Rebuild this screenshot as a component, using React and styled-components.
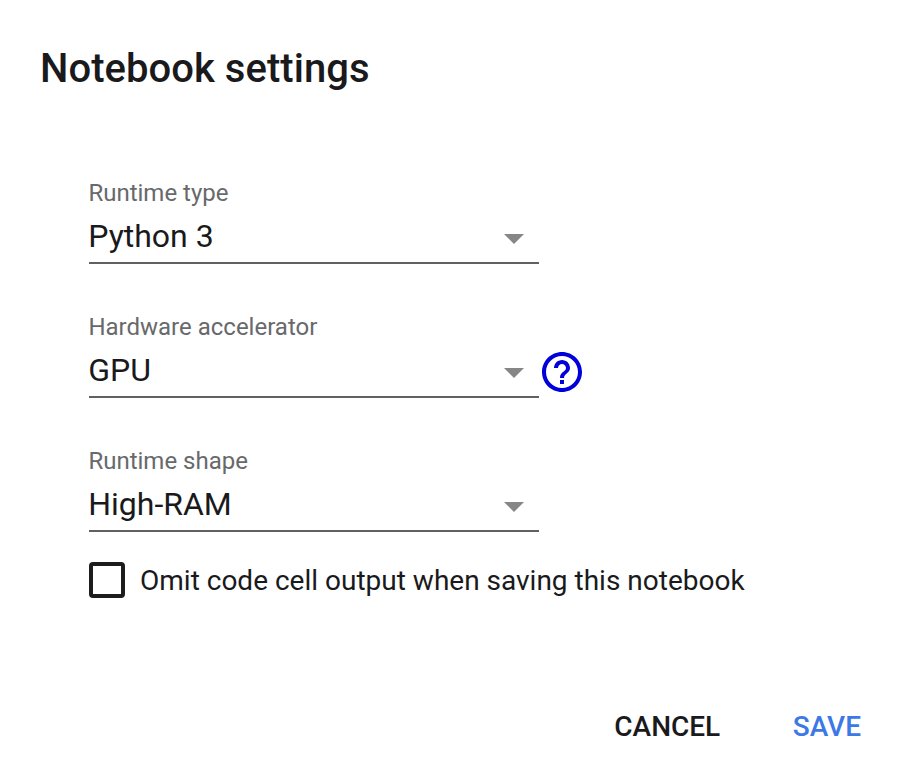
import React from "react";
import styled, { createGlobalStyle } from "styled-components";

const GlobalStyle = createGlobalStyle`
  * { box-sizing: border-box; }
  body { margin: 0; background: #fff; font-family: Roboto, sans-serif; color: #1a1a1c; }
`;

const Dialog = styled.main`
  width: 910px;
  height: 774px;
  padding: 41px 28px 19px 40px;
  display: flex;
  flex-direction: column;
  background: #fff;
`;

const Title = styled.h1`
  margin: 0;
  font-size: 40px;
  line-height: 56px;
  font-weight: 500;
  letter-spacing: 0.04px;
`;

const Form = styled.form`
  display: flex;
  flex-direction: column;
  gap: 34px;
  padding: 79px 0 0 49px;
`;

const Field = styled.div`
  height: 100px;
  display: flex;
  flex-direction: column;
`;

const Label = styled.label`
  font-size: 24px;
  line-height: 34px;
  height: 36px;
  color: #68696b;
  text-indent: -0.6px;
`;

const FieldRow = styled.div`
  display: flex;
  gap: 3px;
`;

const Select = styled.button`
  width: 450px;
  height: 52px;
  border: 0;
  border-bottom: 2px solid #606163;
  padding: 0 15px 0 0;
  background: none;
  display: flex;
  justify-content: space-between;
  font: 400 32px/48px Roboto, sans-serif;
  color: inherit;
  text-indent: -0.8px;
`;

const Arrow = styled.svg`
  width: 20px;
  height: 10px;
  margin-top: 22px;
  fill: #868686;
`;

const Help = styled.svg`
  width: 40px;
  height: 40px;
  margin-top: 6px;
  fill: #0000db;
`;

const CheckRow = styled.label`
  margin-top: 18px;
  padding-left: 49px;
  height: 36px;
  display: flex;
  align-items: center;
  gap: 15px;
  font-size: 28px;
`;

const Box = styled.span`
  width: 36px;
  height: 36px;
  border: 4px solid #1c1c1e;
  border-radius: 4px;
`;

const Actions = styled.footer`
  display: flex;
  justify-content: flex-end;
  gap: 72.5px;
  margin-top: auto;
  padding-right: 21px;
`;

const Action = styled.button`
  border: 0;
  padding: 0;
  background: none;
  font: 500 28px/56px Roboto, sans-serif;
  color: ${(p) => (p.$primary ? "#3c78e6" : "#1a1a1c")};
`;

const fields = [
  { label: "Runtime type", value: "Python 3" },
  { label: "Hardware accelerator", value: "GPU", help: true },
  { label: "Runtime shape", value: "High-RAM" },
];

export default function App() {
  return (
    <Dialog>
      <GlobalStyle />
      <Title>Notebook settings</Title>
      <Form>
        {fields.map((f) => (
          <Field key={f.label}>
            <Label>{f.label}</Label>
            <FieldRow>
              <Select type="button">
                {f.value}
                <Arrow viewBox="0 0 20 10"><path d="M0 0h20L10 10z" /></Arrow>
              </Select>
              {f.help && (
                <Help viewBox="2 2 20 20">
                  <path d="M11 18h2v-2h-2v2zm1-16C6.48 2 2 6.48 2 12s4.48 10 10 10 10-4.48 10-10S17.52 2 12 2zm0 18c-4.41 0-8-3.59-8-8s3.59-8 8-8 8 3.59 8 8-3.59 8-8 8zm0-14c-2.21 0-4 1.79-4 4h2c0-1.1.9-2 2-2s2 .9 2 2c0 2-3 1.75-3 5h2c0-2.25 3-2.5 3-5 0-2.21-1.79-4-4-4z" />
                </Help>
              )}
            </FieldRow>
          </Field>
        ))}
      </Form>
      <CheckRow><Box />Omit code cell output when saving this notebook</CheckRow>
      <Actions>
        <Action>CANCEL</Action>
        <Action $primary>SAVE</Action>
      </Actions>
    </Dialog>
  );
}
